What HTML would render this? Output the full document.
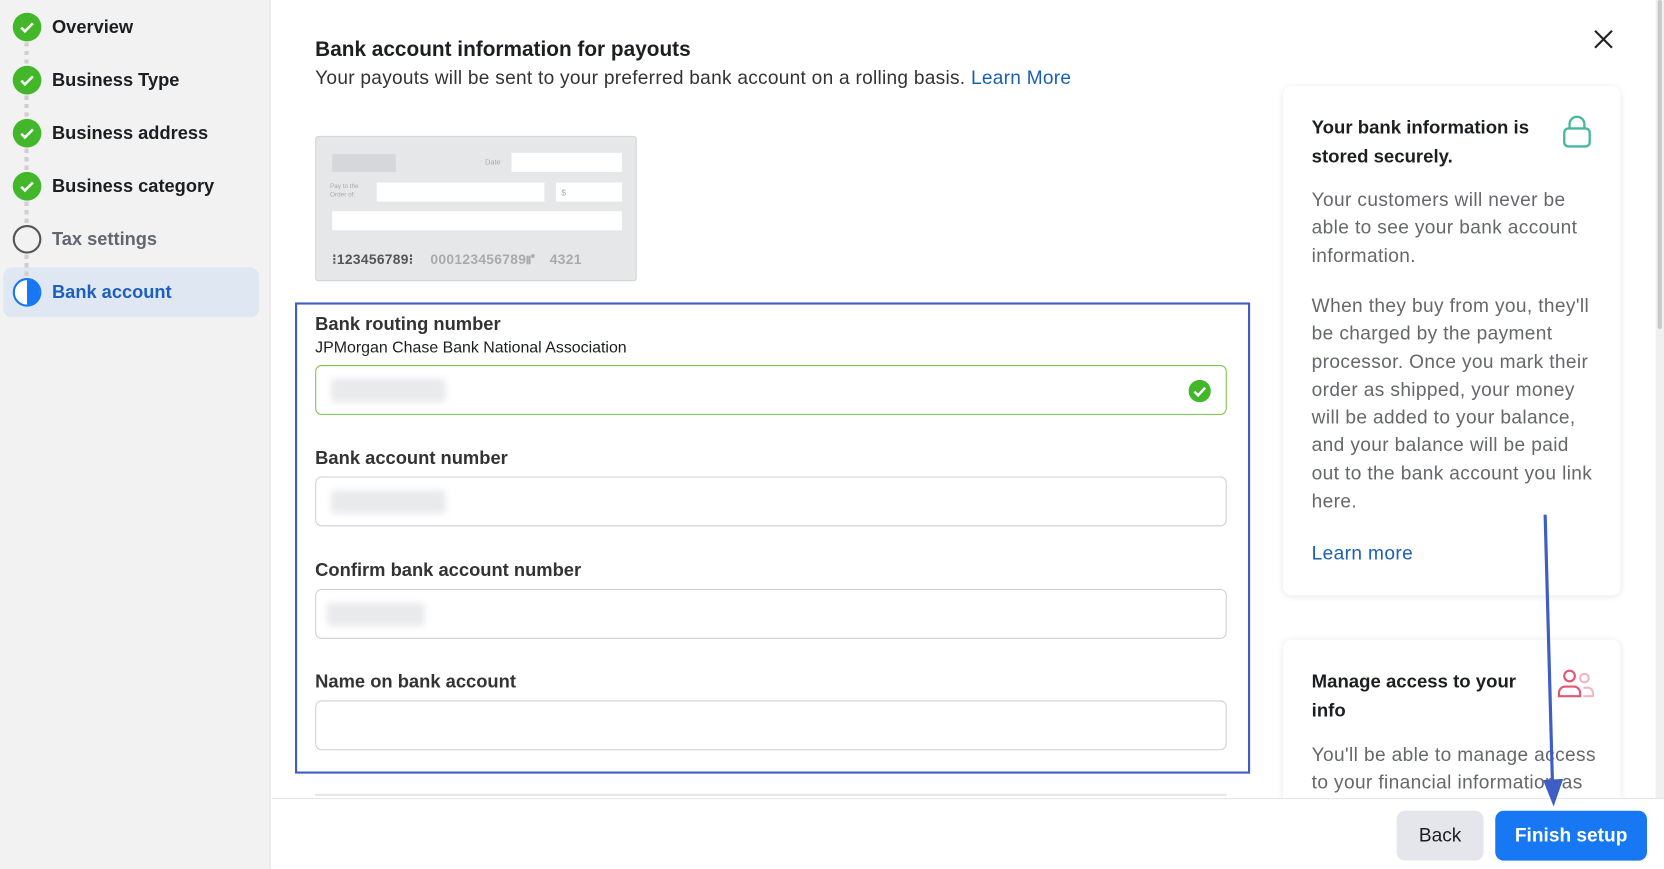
<!DOCTYPE html>
<html><head><meta charset="utf-8"><style>
*{box-sizing:border-box;margin:0;padding:0}
html,body{width:1664px;height:869px;overflow:hidden;background:#fff;font-family:"Liberation Sans",Arial,sans-serif}
#w{position:absolute;left:0;top:0;width:1568px;height:819px;transform:scale(1.06122);transform-origin:0 0}
.a{position:absolute}
.side{left:0;top:0;width:255px;height:819px;background:#f2f2f2;border-right:1px solid #e2e2e2}
.it{position:absolute;left:49px;font-size:17.2px;font-weight:bold;color:#1c1e21;line-height:20px}
.ic{position:absolute;left:12px;width:27px;height:27px;border-radius:50%;background:#42b72a}
.ic svg{position:absolute;left:6px;top:7px}
.dot{position:absolute;left:23px;width:4px;height:22px;background:repeating-linear-gradient(#d0d0d0 0 4px,transparent 4px 8px)}
.lbl{position:absolute;left:297px;font-size:17.3px;font-weight:bold;color:#333;}
.inp{position:absolute;left:297px;width:859px;height:47px;border:1px solid #ccd0d5;border-radius:6px;background:#fff}
.blur{position:absolute;left:14px;top:12px;width:108px;height:22px;background:#e9eaec;border-radius:3px;filter:blur(3px)}
.card{position:absolute;left:1209px;width:318px;background:#fff;border-radius:8px;box-shadow:0 1px 6px rgba(0,0,0,.1)}
.ct{position:absolute;left:27px;font-size:17.5px;font-weight:bold;color:#1c1e21;line-height:26.5px}
.cb{position:absolute;left:27px;font-size:18px;color:#65676b;line-height:26.3px;width:268px;letter-spacing:.35px}
</style></head><body><div id="w">
<div class="a side">
 <div style="position:absolute;left:3px;top:252px;width:241px;height:47px;background:#dfe7f2;border-radius:8px"></div>
 <div class="dot" style="top:40px"></div><div class="dot" style="top:90px"></div><div class="dot" style="top:140px"></div><div class="dot" style="top:190px"></div><div class="dot" style="top:240px"></div>
 <div class="ic" style="top:12px"><svg width="15" height="13" viewBox="0 0 15 13"><path d="M2 7l3.5 3.5L13 3" stroke="#fff" stroke-width="2.4" fill="none"/></svg></div><div class="it" style="top:15px">Overview</div>
 <div class="ic" style="top:62px"><svg width="15" height="13" viewBox="0 0 15 13"><path d="M2 7l3.5 3.5L13 3" stroke="#fff" stroke-width="2.4" fill="none"/></svg></div><div class="it" style="top:65px">Business Type</div>
 <div class="ic" style="top:112px"><svg width="15" height="13" viewBox="0 0 15 13"><path d="M2 7l3.5 3.5L13 3" stroke="#fff" stroke-width="2.4" fill="none"/></svg></div><div class="it" style="top:115px">Business address</div>
 <div class="ic" style="top:162px"><svg width="15" height="13" viewBox="0 0 15 13"><path d="M2 7l3.5 3.5L13 3" stroke="#fff" stroke-width="2.4" fill="none"/></svg></div><div class="it" style="top:165px">Business category</div>
 <div class="ic" style="top:212px;background:#f2f2f2;border:2.5px solid #555"></div><div class="it" style="top:215px;color:#606770">Tax settings</div>
 <div class="ic" style="top:262px;background:linear-gradient(90deg,#fff 50%,#1877f2 50%);border:2.5px solid #1877f2"></div><div class="it" style="top:265px;color:#1d5fbf">Bank account</div>
</div>
<div class="a" style="left:1560px;top:0;width:8px;height:752px;background:#f0f0f0"><div style="margin:0 2px;width:4px;height:310px;background:#c8c8c8;border-radius:2px"></div></div>
<div class="a" style="left:297px;top:36px;font-size:19.6px;font-weight:bold;color:#1c1e21">Bank account information for payouts</div>
<div class="a" style="left:297px;top:63px;font-size:18px;color:#333;letter-spacing:.25px">Your payouts will be sent to your preferred bank account on a rolling basis. <span style="color:#1a5fb4">Learn More</span></div>
<svg class="a" style="left:1500px;top:26px" width="22" height="22" viewBox="0 0 22 22"><path d="M3 3L19 19M19 3L3 19" stroke="#222" stroke-width="2"/></svg>
<div class="a" style="left:297px;top:128px;width:303px;height:137px;background:#e6e7e9;border:1px solid #d2d3d5;border-radius:3px">
 <div class="a" style="left:15px;top:16px;width:60px;height:17px;background:#d6d7da"></div>
 <div class="a" style="left:159px;top:21px;font-size:7px;color:#aaa">Date</div>
 <div class="a" style="left:184px;top:15px;width:104px;height:18px;background:#fff"></div>
 <div class="a" style="left:13px;top:43px;font-size:6px;color:#aaa;line-height:8px">Pay to the<br>Order of:</div>
 <div class="a" style="left:57px;top:43px;width:158px;height:18px;background:#fff"></div>
 <div class="a" style="left:226px;top:43px;width:62px;height:18px;background:#fff;font-size:8px;color:#aaa;padding:5px 5px">$</div>
 <div class="a" style="left:15px;top:70px;width:273px;height:18px;background:#fff"></div>
 <div class="a" style="left:15px;top:108px;font-size:13px;font-weight:bold;color:#555;letter-spacing:.3px">⁝123456789⁝ <span style="color:#aaa;margin-left:12px">000123456789⑈</span><span style="color:#aaa;margin-left:14px">4321</span></div>
</div>
<div class="a" style="left:278px;top:285px;width:900px;height:444px;border:2px solid #3e5ec6"></div>
<div class="lbl" style="top:295px">Bank routing number</div>
<div class="a" style="left:297px;top:319px;font-size:15px;color:#1c1e21">JPMorgan Chase Bank National Association</div>
<div class="inp" style="top:344px;border-color:#7dc243"><div class="blur"></div><svg class="a" style="left:822px;top:13px" width="21" height="21" viewBox="0 0 21 21"><circle cx="10.5" cy="10.5" r="10.5" fill="#42b72a"/><path d="M5.5 11l3.5 3.5L15.5 7.5" stroke="#fff" stroke-width="2.3" fill="none"/></svg></div>
<div class="lbl" style="top:421px">Bank account number</div>
<div class="inp" style="top:449px"><div class="blur"></div></div>
<div class="lbl" style="top:527px">Confirm bank account number</div>
<div class="inp" style="top:555px"><div class="blur" style="width:92px;left:10px"></div></div>
<div class="lbl" style="top:632px">Name on bank account</div>
<div class="inp" style="top:660px"></div>
<div class="a" style="left:297px;top:748px;width:859px;height:2px;background:#e4e6eb"></div>
<div class="card" style="top:81px;height:480px">
 <div class="ct" style="top:26px">Your bank information is<br>stored securely.</div>
 <svg class="a" style="left:263px;top:27px" width="28" height="32" viewBox="0 0 28 32"><rect x="2" y="13" width="24" height="17" rx="4" fill="none" stroke="#45b8a0" stroke-width="2.2"/><path d="M7 13V9a7 7 0 0 1 14 0v4" fill="none" stroke="#45b8a0" stroke-width="2.2"/></svg>
 <div class="cb" style="top:94px">Your customers will never be able to see your bank account information.</div>
 <div class="cb" style="top:194px">When they buy from you, they'll be charged by the payment processor. Once you mark their order as shipped, your money will be added to your balance, and your balance will be paid out to the bank account you link here.</div>
 <div class="cb" style="top:427px;color:#1a5fb4">Learn more</div>
</div>
<div class="card" style="top:603px;height:160px">
 <div class="ct" style="top:26px">Manage access to your<br>info</div>
 <svg class="a" style="left:258px;top:26px" width="36" height="32" viewBox="0 0 36 32"><circle cx="12" cy="8" r="5" fill="none" stroke="#e4566f" stroke-width="2"/><path d="M2 27v-3a6 6 0 0 1 6-6h8a6 6 0 0 1 6 6v3z" fill="none" stroke="#e4566f" stroke-width="2"/><circle cx="26" cy="10" r="4" fill="none" stroke="#f2b6c2" stroke-width="2"/><path d="M25 19h4a5 5 0 0 1 5 5v3h-9" fill="none" stroke="#f2b6c2" stroke-width="2"/></svg>
 <div class="cb" style="top:95px">You'll be able to manage access to your financial information as</div>
</div>
<div class="a" style="left:256px;top:752px;width:1312px;height:67px;background:#fff;border-top:1px solid #e4e6eb"></div>
<div class="a" style="left:1316px;top:764px;width:82px;height:47px;background:#e4e6eb;border-radius:8px;font-size:18px;color:#1c1e21;text-align:center;line-height:47px">Back</div>
<div class="a" style="left:1409px;top:764px;width:143px;height:47px;background:#1877f2;border-radius:8px;font-size:18px;font-weight:bold;color:#fff;text-align:center;line-height:47px">Finish setup</div>
<svg class="a" style="left:1440px;top:480px" width="40" height="285" viewBox="0 0 40 285"><path d="M16 5L23 262" stroke="#3e5ec6" stroke-width="3"/><path d="M14 255L24 280L33 254z" fill="#3e5ec6"/></svg>
</div></body></html>
